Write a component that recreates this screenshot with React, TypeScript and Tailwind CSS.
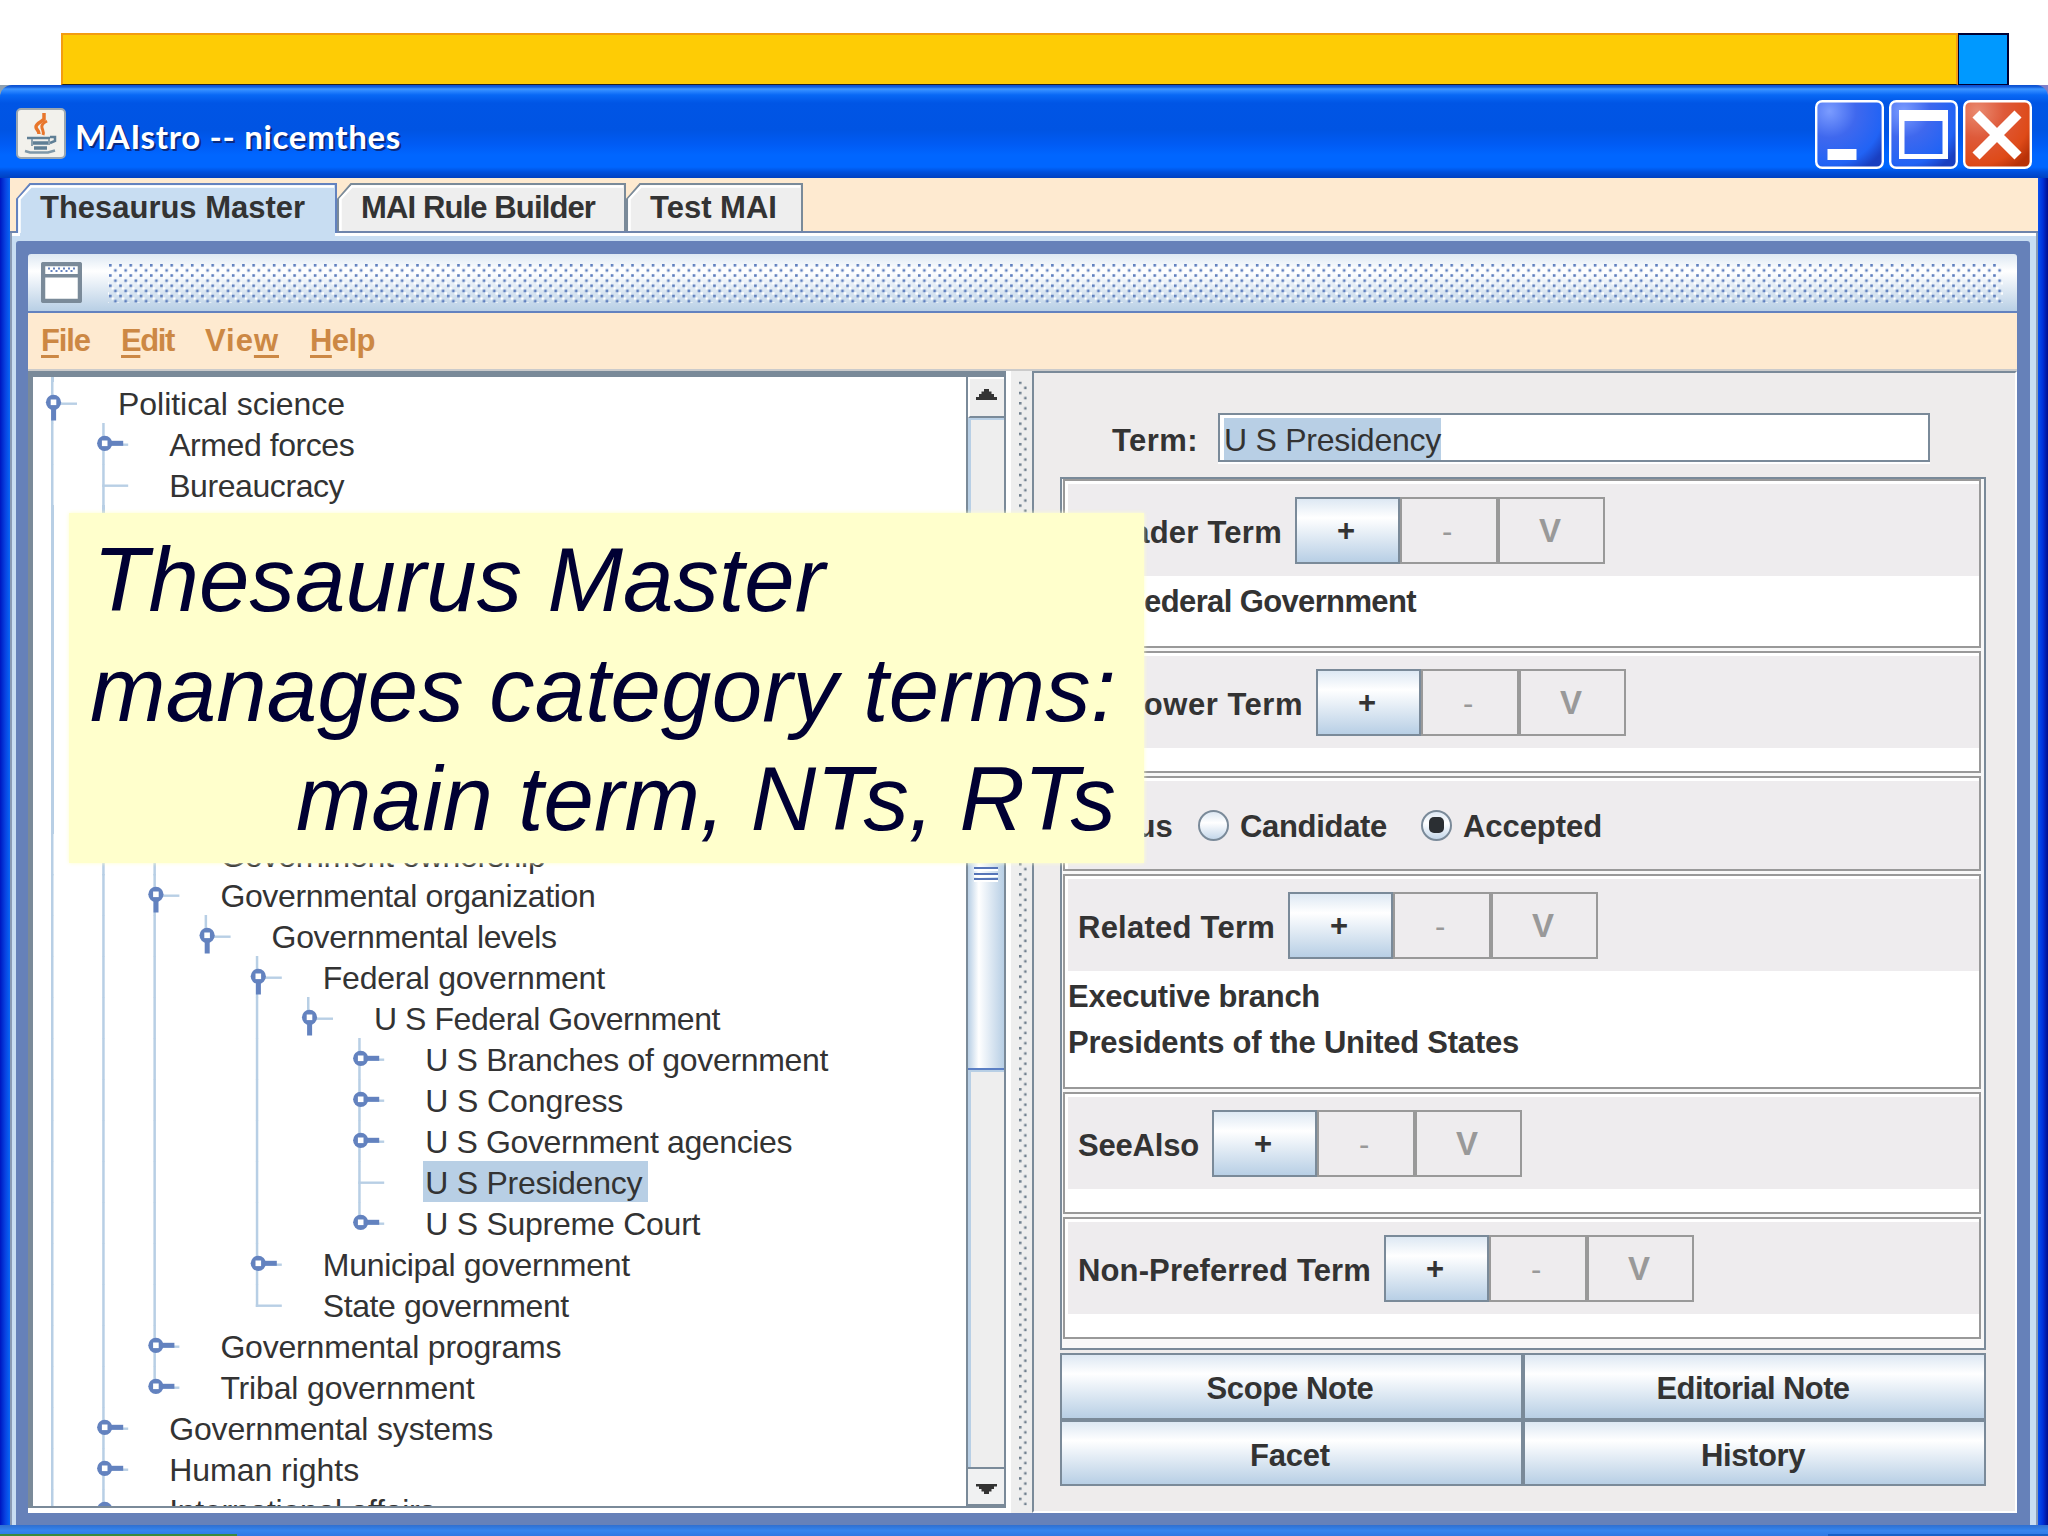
import React, { useLayoutEffect, useRef } from 'react';
import clsx from 'clsx';

type NodeState = 'open' | 'closed' | 'leaf';

interface TreeRow {
  label: string;
  level: number;
  state: NodeState;
  width: number;
  /** Levels whose guide line runs through the full row */
  guides: number[];
  /** Guide line of the row's own level stops at the handle */
  last?: boolean;
  selected?: boolean;
}

const ROW_HEIGHT = 40.96;
const INDENT = 51.2;

const topRows: TreeRow[] = [
  { label: 'Political science', level: 0, state: 'open', width: 227, guides: [0] },
  { label: 'Armed forces', level: 1, state: 'closed', width: 185, guides: [0, 1] },
  { label: 'Bureaucracy', level: 1, state: 'leaf', width: 175, guides: [0, 1] },
];

const bottomRows: TreeRow[] = [
  { label: 'Government ownership', level: 2, state: 'leaf', width: 325, guides: [0, 1, 2] },
  { label: 'Governmental organization', level: 2, state: 'open', width: 375, guides: [0, 1, 2] },
  { label: 'Governmental levels', level: 3, state: 'open', width: 285, guides: [0, 1, 2], last: true },
  { label: 'Federal government', level: 4, state: 'open', width: 282, guides: [0, 1, 2, 4] },
  { label: 'U S Federal Government', level: 5, state: 'open', width: 346, guides: [0, 1, 2, 4], last: true },
  { label: 'U S Branches of government', level: 6, state: 'closed', width: 403, guides: [0, 1, 2, 4, 6] },
  { label: 'U S Congress', level: 6, state: 'closed', width: 198, guides: [0, 1, 2, 4, 6] },
  { label: 'U S Government agencies', level: 6, state: 'closed', width: 367, guides: [0, 1, 2, 4, 6] },
  { label: 'U S Presidency', level: 6, state: 'leaf', width: 217, guides: [0, 1, 2, 4, 6], selected: true },
  { label: 'U S Supreme Court', level: 6, state: 'closed', width: 275, guides: [0, 1, 2, 4], last: true },
  { label: 'Municipal government', level: 4, state: 'closed', width: 307, guides: [0, 1, 2, 4] },
  { label: 'State government', level: 4, state: 'leaf', width: 246, guides: [0, 1, 2], last: true },
  { label: 'Governmental programs', level: 2, state: 'closed', width: 341, guides: [0, 1, 2] },
  { label: 'Tribal government', level: 2, state: 'closed', width: 254, guides: [0, 1], last: true },
  { label: 'Governmental systems', level: 1, state: 'closed', width: 324, guides: [0, 1] },
  { label: 'Human rights', level: 1, state: 'closed', width: 190, guides: [0, 1] },
  { label: 'International affairs', level: 1, state: 'closed', width: 266, guides: [0, 1] },
];

/** Single line of text, tracked so that it fills the given width */
const FitText: React.FC<{ width: number; className?: string; children: React.ReactNode }> = ({
  width,
  className,
  children,
}) => {
  const ref = useRef<HTMLSpanElement>(null);

  useLayoutEffect(() => {
    const el = ref.current;
    if (!el) return;
    el.style.letterSpacing = '0px';
    const natural = el.getBoundingClientRect().width;
    const count = el.textContent?.length || 1;
    el.style.letterSpacing = `${(width - natural) / count}px`;
  }, [width]);

  return (
    <span ref={ref} className={clsx('inline-block shrink-0 whitespace-pre', className)}>
      {children}
    </span>
  );
};

const Guides: React.FC<{ row: TreeRow }> = ({ row }) => {
  const x = 18 + row.level * INDENT;
  const cx = x + 2.5;
  return (
    <svg
      width={81 + row.level * INDENT}
      height={ROW_HEIGHT}
      className="block shrink-0 overflow-visible"
    >
      {row.guides.map((g) => (
        <rect key={g} x={18 + g * INDENT} y="0" width="2.5" height={ROW_HEIGHT + 0.5} fill="#b8cfe5" />
      ))}
      {row.last && <rect x={x} y="0" width="2.5" height="23" fill="#b8cfe5" />}
      <rect x={x} y="20.5" width="26" height="2.4" fill="#b8cfe5" />
      {row.state !== 'leaf' && (
        <>
          {row.state === 'open' ? (
            <rect x={cx - 2.4} y="20" width="5" height="18.5" fill="#6382bf" />
          ) : (
            <rect x={cx} y="17.8" width="18.5" height="5" fill="#6382bf" />
          )}
          <circle cx={cx} cy="20.3" r="7.6" fill="#6382bf" />
          <rect x={cx - 2.8} y="17.5" width="5.6" height="5.6" fill="#fff" />
        </>
      )}
    </svg>
  );
};

const TreeItem: React.FC<{ row: TreeRow }> = ({ row }) => (
  <div className="flex h-[40.96px] shrink-0">
    <Guides row={row} />
    <div className={clsx('ml-[2px] h-[41px] pl-[2px] pr-[6px]', row.selected && 'bg-[#b8cfe5]')}>
      <FitText width={row.width} className="leading-[44px] text-[32px] text-[#333]">
        {row.label}
      </FitText>
    </div>
  </div>
);

const ThesaurusTree: React.FC = () => (
  <div className="flex h-[1129px] w-[933px] flex-col overflow-hidden bg-white">
    <div className="flex h-[5px] shrink-0">
      <div className="ml-[18px] h-full w-[2.5px] bg-[#b8cfe5]" />
    </div>
    {topRows.map((row) => (
      <TreeItem key={row.label} row={row} />
    ))}
    <div className="flex h-[328.68px] shrink-0">
      <div className="ml-[18px] h-full w-[2.5px] bg-[#b8cfe5]" />
      <div className="ml-[48.7px] h-full w-[2.5px] bg-[#b8cfe5]" />
    </div>
    {bottomRows.map((row) => (
      <TreeItem key={row.label} row={row} />
    ))}
  </div>
);

const ScrollBar: React.FC = () => (
  <div className="flex h-[1131px] w-[40px] flex-col border-x-2 border-[#7a8a99] bg-[#eee]">
    <div className="flex h-[41px] items-start justify-center border-b-2 border-[#7a8a99] border-l-2 border-l-white border-t-2 border-t-white pt-[10px]">
      <svg width="21" height="11" viewBox="0 0 21 11" className="-ml-[1px]">
        <path d="M8 0h5v2.500h2.500V5H18v3h3v3H0V8h3V5h2.500V2.500H8z" fill="#333" />
      </svg>
    </div>
    <div className="h-[380px] border-l-[3px] border-t-2 border-[#b8cfe5]" />
    <div className="flex h-[272px] flex-col items-center border-y-2 border-[#5b7fc4] bg-linear-to-r from-[#b8cfe5] via-[#ffffff] via-30% to-[#b8cfe5]">
      <div className="mt-[67px] flex flex-col gap-[1.5px]">
        <div className="h-[4px] w-[24px] border-b-2 border-white bg-[#5574b8]" />
        <div className="h-[4px] w-[24px] border-b-2 border-white bg-[#5574b8]" />
        <div className="h-[4px] w-[24px] border-b-2 border-white bg-[#5574b8]" />
      </div>
    </div>
    <div className="flex-1 border-l-[3px] border-t-2 border-[#b8cfe5]" />
    <div className="flex h-[41px] items-start justify-center border-y-2 border-b-[4px] border-[#7a8a99] bg-[#f0f1f2] pt-[15px]">
      <svg width="21" height="10" viewBox="0 0 21 10">
        <path d="M0 0h21v2.500h-3V5h-2.500v2.500H13V10H8V7.500H5.500V5H3V2.500H0z" fill="#333" />
      </svg>
    </div>
  </div>
);

const AddRemoveButtons: React.FC = () => (
  <div className="flex h-[66.500px] text-[31px] leading-[66px]">
    <div className="w-[105px] border-[2.500px] border-[#7a8a99] bg-linear-to-b from-[#dde8f3] via-white via-30% to-[#b8cfe5] pr-[3px] text-center leading-[63px] text-[#333]">
      +
    </div>
    <div className="w-[97.500px] border-[2.500px] border-[#999] pr-[3px] text-center font-normal text-[#999]">-</div>
    <div className="w-[107px] border-[2.500px] border-[#999] pr-[2px] text-center text-[33px] leading-[64px] text-[#999]">V</div>
  </div>
);

interface TermSectionProps {
  label: string;
  labelWidth: number;
  items?: { text: string; width: number }[];
  className: string;
}

const TermSection: React.FC<TermSectionProps> = ({ label, labelWidth, items = [], className }) => (
  <div className={clsx('mb-[3px] w-[918px] border-2 border-[#999] bg-white pl-[3px] pt-[3px]', className)}>
    <div className="flex h-[92px] items-start bg-[#eeecee] pl-[10px] pt-[13px]">
      <FitText width={labelWidth} className="mr-[13px] leading-[71px]">
        {label}
      </FitText>
      <AddRemoveButtons />
    </div>
    <div className="flex flex-col pt-[3px]">
      {items.map((item) => (
        <FitText key={item.text} width={item.width} className="self-start leading-[46px]">
          {item.text}
        </FitText>
      ))}
    </div>
  </div>
);

const Radio: React.FC<{ checked?: boolean }> = ({ checked }) => (
  <div className="flex h-[31px] w-[31px] items-center justify-center rounded-full border-[2.500px] border-[#7a8a99] bg-linear-to-b from-[#dde8f3] via-white via-40% to-[#c4d7ea]">
    {checked && <div className="h-[16px] w-[15px] rounded-[5px] bg-[#2b2f33]" />}
  </div>
);

const NoteButton: React.FC<{ label: string; width: number }> = ({ label, width }) => (
  <div className="h-[66.500px] border-[2.500px] border-[#7a8a99] bg-linear-to-b from-[#dde8f3] via-white via-30% to-[#b8cfe5] pr-[3px] text-center">
    <FitText width={width} className="leading-[67px]">
      {label}
    </FitText>
  </div>
);

const TermPanel: React.FC = () => (
  <div className="flex h-[1142px] w-[985px] flex-col border-b-2 border-r-2 border-white border-l-2 border-l-[#7a8a99] border-t-2 border-t-[#7a8a99] bg-[#eeecec] text-[31px] font-bold text-[#333]">
    <div className="ml-[78px] mt-[40px] flex h-[50px] shrink-0">
      <FitText width={86} className="mr-[20px] leading-[55px]">
        Term:
      </FitText>
      <div className="flex h-[49px] w-[712px] border-2 border-[#7a8a99] bg-white pl-[4px] pt-[3px] shadow-[0_2px_0_#fff]">
        <div className="h-[42px] w-[217px] bg-[#b8cfe5]">
          <FitText width={217} className="text-[32px] font-normal leading-[43px]">
            U S Presidency
          </FitText>
        </div>
      </div>
    </div>

    <div className="ml-[26px] mt-[14px] flex h-[873px] w-[926px] shrink-0 flex-col border-2 border-[#7a8a99] bg-[#f8f8f8] pl-px">
      <TermSection
        label="Broader Term"
        labelWidth={204}
        items={[{ text: 'U S Federal Government', width: 348 }]}
        className="h-[169px]"
      />
      <TermSection label="Narrower Term" labelWidth={225} className="h-[122px]" />
      <div className="mb-[3px] flex h-[95px] w-[918px] border-2 border-[#999] bg-white pl-[3px] pt-[3px]">
        <div className="flex flex-1 items-center bg-[#eeecee] pl-[9px]">
          <FitText width={96} className="mr-[25px] mt-[3px] leading-[50px]">
            Status
          </FitText>
          <Radio />
          <FitText width={147} className="ml-[11px] mr-[34px] mt-[3px] leading-[50px]">
            Candidate
          </FitText>
          <Radio checked />
          <FitText width={139} className="ml-[11px] mt-[3px] leading-[50px]">
            Accepted
          </FitText>
        </div>
      </div>
      <TermSection
        label="Related Term"
        labelWidth={197}
        items={[
          { text: 'Executive branch', width: 252 },
          { text: 'Presidents of the United States', width: 451 },
        ]}
        className="h-[215px]"
      />
      <TermSection label="SeeAlso" labelWidth={121} className="h-[122px]" />
      <TermSection label="Non-Preferred Term" labelWidth={293} className="h-[122px]" />
    </div>

    <div className="ml-[26px] mt-[3px] grid w-[926px] grid-cols-2">
      <NoteButton label="Scope Note" width={167} />
      <NoteButton label="Editorial Note" width={193} />
      <NoteButton label="Facet" width={80} />
      <NoteButton label="History" width={104} />
    </div>
  </div>
);

const Splitter: React.FC = () => (
  <svg width="26" height="1142" className="block shrink-0">
    <defs>
      <pattern id="grip" width="10.24" height="10.24" patternUnits="userSpaceOnUse" x="9" y="10.500">
        <rect width="2.500" height="2.500" fill="#6f7f8e" />
        <rect x="5.120" y="5.120" width="2.500" height="2.500" fill="#6f7f8e" />
      </pattern>
    </defs>
    <rect width="26" height="1142" fill="#fff" />
    <rect x="5" width="21" height="1142" fill="#eeeeee" />
    <rect x="9" y="10.500" width="8" height="1124" fill="url(#grip)" transform="translate(4 0)" />
  </svg>
);

const FrameTitle: React.FC = () => (
  <div className="flex h-[59px] items-start rounded-t-[3px] border-b-2 border-[#6382bf] bg-linear-to-b from-[#dde8f3] via-white via-30% to-[#b8cfe5] pl-[13px] pt-[8px]">
    <svg width="41" height="41" viewBox="0 0 41 41" className="shrink-0">
      <rect x="2" y="2" width="37" height="37" rx="1" fill="#fff" stroke="#7a8a99" strokeWidth="4.500" />
      <rect x="2" y="12" width="37" height="3.500" fill="#7a8a99" />
      <path
        d="M7 6.500h2M12 6.500h2M17 6.500h2M22 6.500h2M27 6.500h2M32 6.500h2M9.500 9h2M14.500 9h2M19.500 9h2M24.500 9h2M29.500 9h2"
        stroke="#6382bf"
        strokeWidth="2"
      />
    </svg>
    <svg width="1895" height="41" className="ml-[26px] mt-[2px] shrink-0">
      <defs>
        <pattern id="bumps" width="10.24" height="10.24" patternUnits="userSpaceOnUse" x="1">
          <rect width="2.600" height="2.600" fill="#5f7fbe" />
          <rect x="2.600" y="2.600" width="2.500" height="2.500" fill="#fff" />
          <rect x="5.120" y="5.120" width="2.600" height="2.600" fill="#5f7fbe" />
          <rect x="7.700" y="7.700" width="2.500" height="2.500" fill="#fff" />
        </pattern>
      </defs>
      <rect width="1895" height="39" fill="url(#bumps)" />
    </svg>
  </div>
);

const MenuBar: React.FC = () => (
  <div className="flex h-[58px] border-b-2 border-[#cbcbcb] bg-[#feead0] pl-[13px] text-[31px] font-bold leading-[55px] text-[#cc8844]">
    <FitText width={49} className="mr-[31px]">
      <span className="underline decoration-[3px] underline-offset-[4px]">F</span>ile
    </FitText>
    <FitText width={53} className="mr-[31px]">
      <span className="underline decoration-[3px] underline-offset-[4px]">E</span>dit
    </FitText>
    <FitText width={74} className="mr-[31px]">
      Vie<span className="underline decoration-[3px] underline-offset-[4px]">w</span>
    </FitText>
    <FitText width={65}>
      <span className="underline decoration-[3px] underline-offset-[4px]">H</span>elp
    </FitText>
  </div>
);

interface TabProps {
  label: string;
  width: number;
  textWidth: number;
  active?: boolean;
}

const Tab: React.FC<TabProps> = ({ label, width, textWidth, active }) => (
  <div className="relative h-[55px] shrink-0" style={{ width }}>
    <svg width={width} height="55" className="absolute inset-0">
      <path
        d={`M1 56V21L14 6H${width - 1}V56z`}
        fill={active ? '#c8ddf2' : '#eeeeee'}
        stroke={active ? '#6382bf' : '#7a8a99'}
        strokeWidth="2"
      />
      <path d={`M3.500 55V21L15 8.500H${width - 3}`} fill="none" stroke="#fff" strokeWidth="2.500" />
      {!active && <rect y="53" width={width} height="2" fill="#6f85ac" />}
    </svg>
    <FitText width={textWidth} className="relative ml-[24px] leading-[60px]">
      {label}
    </FitText>
  </div>
);

const TabStrip: React.FC = () => (
  <>
    <div className="flex h-[55px] bg-[#feead0] text-[31px] font-bold text-[#333]">
      <div className="w-[6px] border-b-2 border-[#6f85ac]" />
      <Tab label="Thesaurus Master" width={321} textWidth={265} active />
      <Tab label="MAI Rule Builder" width={289} textWidth={234} />
      <Tab label="Test MAI" width={177} textWidth={127} />
      <div className="flex-1 border-b-2 border-[#6f85ac]" />
    </div>
    <div className="flex h-[8px] border-x-2 border-[#8a9bb5] bg-[#c8ddf2]">
      <div className="h-[3px] w-[8px] bg-white" />
      <div className="w-[315px]" />
      <div className="h-[3px] flex-1 bg-white" />
    </div>
  </>
);

const JavaIcon: React.FC = () => (
  <svg width="50" height="51" viewBox="0 0 50 51" className="shrink-0">
    <rect x="1" y="1" width="48" height="49" rx="4" fill="#f2f1ec" stroke="#9aa7b2" strokeWidth="2" />
    <g fill="none">
      <path d="M28 5v7M28 11c-2 3-8 4-8 8 0 3 3 3 3 7" stroke="#e8762b" strokeWidth="3.500" />
      <path d="M31 13c-4 2-6 4-5 7s2 4 1 7" stroke="#e8762b" strokeWidth="3" />
      <path d="M11 30h23" stroke="#5f7f95" strokeWidth="2.500" />
      <path d="M34 29h5v4l-5 2" stroke="#5f7f95" strokeWidth="2.500" />
      <path d="M17 35h15M18 40h13" stroke="#5f7f95" strokeWidth="3.500" />
      <path d="M16 31v7M33 31v6" stroke="#8aa0ae" strokeWidth="2" />
      <path d="M9 43l5 1.500h18l7-2" stroke="#7f98a8" strokeWidth="2.500" />
    </g>
  </svg>
);

const TitleBar: React.FC = () => (
  <div className="h-[93px] shrink-0 bg-linear-to-r from-[#8fa0b0] to-[#7f7fc8]">
    <div className="flex h-[93px] w-full items-start rounded-t-[12px] bg-[linear-gradient(180deg,#0a4fd0_0px,#1560dd_2px,#3d95ff_4px,#2a86ff_6px,#0868f5_10px,#0055e5_18px,#0054e3_45px,#005cf5_60px,#0066ff_70px,#0066ff_82px,#0050dd_87px,#0040c0_93px)] pl-[16px]">
      <div className="pt-[23px]">
        <JavaIcon />
      </div>
      <FitText
        width={326}
        className="ml-[9px] mt-[31px] font-['Lato'] text-[33px] font-bold leading-[40px] text-white [text-shadow:2px_2px_0_#0a2a80]"
      >
        MAIstro -- nicemthes
      </FitText>
      <div className="ml-auto mr-[16px] flex gap-[5px] pt-[15px]">
        <svg width="69" height="69" viewBox="0 0 69 69">
          <defs>
            <radialGradient id="blueBtn" cx="0.2" cy="0.15" r="1">
              <stop offset="0" stopColor="#7b9cff" />
              <stop offset="0.4" stopColor="#3f68ee" />
              <stop offset="0.8" stopColor="#2163f5" />
              <stop offset="1" stopColor="#1a3fc0" />
            </radialGradient>
          </defs>
          <rect x="1.200" y="1.200" width="66.600" height="66.600" rx="6" fill="url(#blueBtn)" stroke="#fff" strokeWidth="2.400" />
          <rect x="12.500" y="49" width="29" height="11" fill="#fff" />
        </svg>
        <svg width="69" height="69" viewBox="0 0 69 69">
          <rect x="1.200" y="1.200" width="66.600" height="66.600" rx="6" fill="url(#blueBtn)" stroke="#fff" strokeWidth="2.400" />
          <path d="M10 10h49v49H10zM15.500 21v33H53.500V21z" fill="#fff" fillRule="evenodd" />
        </svg>
        <svg width="69" height="69" viewBox="0 0 69 69">
          <defs>
            <radialGradient id="redBtn" cx="0.2" cy="0.15" r="1">
              <stop offset="0" stopColor="#ea8a70" />
              <stop offset="0.4" stopColor="#de5a3a" />
              <stop offset="0.8" stopColor="#de4a18" />
              <stop offset="1" stopColor="#b83208" />
            </radialGradient>
          </defs>
          <rect x="1.200" y="1.200" width="66.600" height="66.600" rx="6" fill="url(#redBtn)" stroke="#fff" strokeWidth="2.400" />
          <path d="M13 14l42 42M55 14L13 56" stroke="#fff" strokeWidth="10" />
        </svg>
      </div>
    </div>
  </div>
);

export const App: React.FC = () => (
  <div className="relative flex h-[1536px] w-[2048px] flex-col overflow-hidden bg-white font-['Liberation_Sans',Arial,sans-serif]">
    {/* Slide header band */}
    <div className="flex h-[85px] shrink-0 pl-[61px] pt-[33px]">
      <div className="h-[52px] w-[1897px] border-2 border-b border-[#f39c12] border-b-[#222] bg-[#fecc05]" />
      <div className="h-[52px] w-[51px] border-2 border-b border-l border-[#000033] bg-[#0099ff]" />
    </div>

    <TitleBar />

    <div className="flex h-[1347px] shrink-0">
      <div className="w-[10px] bg-linear-to-r from-[#0012c0] via-[#0a3fe0] to-[#0a66f5]" />
      <div className="flex w-[2028px] flex-col">
        <TabStrip />
        <div className="flex h-[1284px] border-x-2 border-[#8a9bb5] bg-[#c8ddf2] pl-[4px] pr-[6px]">
          <div className="w-[2014px] rounded-t-[3px] bg-[#6681b9] pb-[12px] pl-[12px] pr-[13px] pt-[13px]">
            <FrameTitle />
            <MenuBar />
            <div className="flex h-[1142px] bg-white">
              <div className="flex h-[1137px] border-b-2 border-l-[5px] border-t-[6px] border-[#7a8a99]">
                <ThesaurusTree />
                <ScrollBar />
              </div>
              <Splitter />
              <TermPanel />
            </div>
          </div>
        </div>
      </div>
      <div className="w-[10px] bg-linear-to-r from-[#0a50f0] via-[#0030d8] to-[#000f90]" />
    </div>

    {/* Task bar edge */}
    <div className="flex h-[11px] items-end bg-linear-to-b from-[#2f6fd0] via-[#3585ee] to-[#2f78e4]">
      <div className="h-[2px] w-[237px] bg-[#3c8a3c]" />
      <div className="ml-auto h-[2px] w-[220px] bg-[#1560c8]" />
    </div>

    {/* Callout */}
    <div className="absolute left-[69px] top-[513px] flex h-[350px] w-[1075px] flex-col bg-[#ffffcc] pl-[21px] pr-[28px] pt-[12px] text-[90.600px] italic leading-[109.500px] text-[#000033] shadow-[0_0_4px_#ffffcc]">
      <FitText width={732} className="ml-[3px] self-start">
        Thesaurus Master
      </FitText>
      <FitText width={1026} className="self-start">
        manages category terms:
      </FitText>
      <FitText width={820} className="self-end">
        main term, NTs, RTs
      </FitText>
    </div>
  </div>
);

export default App;
